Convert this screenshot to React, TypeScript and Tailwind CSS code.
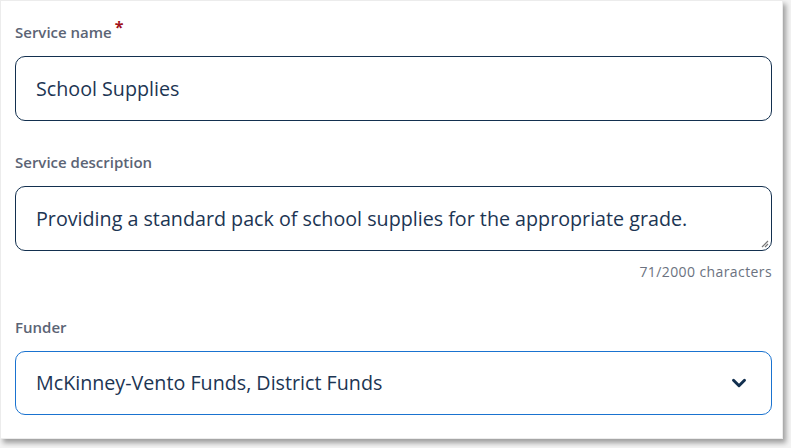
import { ChevronDown } from "lucide-react";

export default function App() {
  return (
    <div className="w-[791px] h-[448px] bg-[#f3f3f3] font-['Open_Sans',sans-serif]">
      <div className="w-[783px] h-[439px] bg-white border border-[#ececec] shadow-[3px_4px_5px_rgba(0,0,0,0.35)] pl-[14px] pr-[10px] pt-[20px]">
        <label className="flex items-start text-[15px] font-semibold text-[#5b6475] leading-[22px]">
          Service name
          <span className="ml-[3px] -mt-[5px] text-[#a1121b] text-[16px] font-bold">*</span>
        </label>
        <div className="mt-[13px] h-[65px] rounded-[10px] border border-[#13304f] flex items-center px-[20px] text-[19.7px] text-[#1c3553]">
          School Supplies
        </div>

        <label className="block mt-[30px] text-[15px] font-semibold text-[#5b6475] leading-[22px]">
          Service description
        </label>
        <div className="relative mt-[13px] h-[65px] rounded-[10px] border border-[#13304f] flex items-center px-[20px] text-[19.7px] text-[#1c3553]">
          Providing a standard pack of school supplies for the appropriate grade.
          <svg className="absolute right-[2px] bottom-[2px]" width="9" height="9" viewBox="0 0 9 9">
            <path d="M8 2 L2 8 M8 5 L5 8" stroke="#777" strokeWidth="1.2" />
          </svg>
        </div>
        <div className="mt-[11px] text-right text-[14px] tracking-[0.4px] text-[#6b7280] leading-[20px]">
          71/2000 characters
        </div>

        <label className="block mt-[34px] text-[15px] font-semibold text-[#5b6475] leading-[22px]">
          Funder
        </label>
        <div className="mt-[13px] h-[64px] rounded-[10px] border border-[#1a73d0] flex items-center justify-between pl-[20px] pr-[21px] text-[19.7px] text-[#1c3553]">
          <span>McKinney-Vento Funds, District Funds</span>
          <ChevronDown size={22} strokeWidth={3.2} className="text-[#13304f]" />
        </div>
      </div>
    </div>
  );
}
